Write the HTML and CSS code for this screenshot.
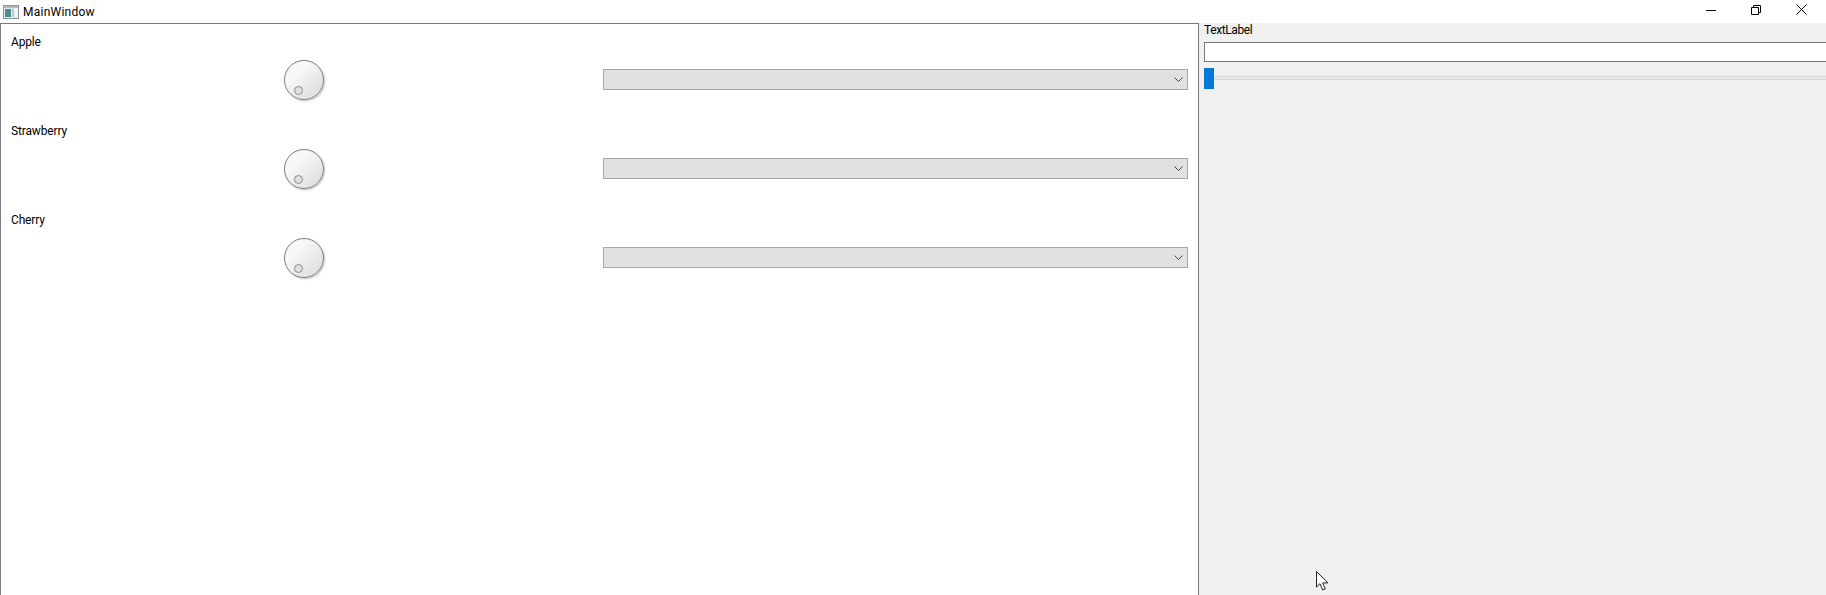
FILE: index.html
```html
<!DOCTYPE html>
<html lang="en">
<head>
    <meta charset="UTF-8">
    <title>MainWindow</title>
    <link rel="stylesheet" href="styles.css">
</head>
<body>
    <div class="titlebar">
        <svg class="app-icon" width="16" height="16" viewBox="0 0 16 16">
            <rect x="0.5" y="1.5" width="15" height="13" fill="#e8eef0" stroke="#8a949c"/>
            <rect x="1" y="2" width="14" height="2" fill="#aebcc6"/>
            <rect x="2" y="5" width="6" height="8" fill="#4f8f8a"/>
            <rect x="9" y="5" width="2" height="8" fill="#b5cbd0"/>
            <rect x="12" y="5" width="2" height="8" fill="#f5f8f8"/>
        </svg>
        <span class="title">MainWindow</span>
        <div class="win-buttons">
            <svg width="10" height="10" viewBox="0 0 10 10"><path d="M0 5.5H10" stroke="#000" fill="none"/></svg>
            <svg width="10" height="10" viewBox="0 0 10 10"><path d="M0.5 2.5H7.5V9.5H0.5ZM2.5 2.5V0.5H9.5V7.5H7.5" stroke="#000" fill="none"/></svg>
            <svg width="11" height="11" viewBox="0 0 11 11"><path d="M0.5 0.5L10.5 10.5M10.5 0.5L0.5 10.5" stroke="#000" fill="none"/></svg>
        </div>
    </div>

    <div class="main">
        <div class="left-panel">
            <div class="fruit">
                <div class="fruit-name">Apple</div>
                <div class="fruit-row">
                    <div class="dial"><span class="dial-notch"></span></div>
                    <div class="combo"><svg width="9" height="5" viewBox="0 0 9 5"><path d="M0.5 0.5L4.5 4.5L8.5 0.5" stroke="#444" fill="none"/></svg></div>
                </div>
            </div>
            <div class="fruit">
                <div class="fruit-name">Strawberry</div>
                <div class="fruit-row">
                    <div class="dial"><span class="dial-notch"></span></div>
                    <div class="combo"><svg width="9" height="5" viewBox="0 0 9 5"><path d="M0.5 0.5L4.5 4.5L8.5 0.5" stroke="#444" fill="none"/></svg></div>
                </div>
            </div>
            <div class="fruit">
                <div class="fruit-name">Cherry</div>
                <div class="fruit-row">
                    <div class="dial"><span class="dial-notch"></span></div>
                    <div class="combo"><svg width="9" height="5" viewBox="0 0 9 5"><path d="M0.5 0.5L4.5 4.5L8.5 0.5" stroke="#444" fill="none"/></svg></div>
                </div>
            </div>
        </div>

        <div class="right-panel">
            <div class="text-label">TextLabel</div>
            <div class="line-edit"></div>
            <div class="slider">
                <div class="slider-handle"></div>
                <div class="slider-groove"></div>
            </div>
        </div>
    </div>

    <svg class="cursor" width="13" height="20" viewBox="0 0 13 20">
        <path d="M0.5 0.5V16L4 12.7L6.7 19L9.3 17.9L6.7 11.9H12Z" fill="#fff" stroke="#222"/>
    </svg>
</body>
</html>
```

FILE: styles.css
```css
* {
    margin: 0;
    padding: 0;
    box-sizing: border-box;
}

html, body {
    height: 100%;
    overflow: hidden;
}

body {
    font-family: Roboto, sans-serif;
    font-size: 12px;
    color: #000;
    background-color: #f0f0f0;
    position: relative;
}

.titlebar {
    display: flex;
    align-items: center;
    height: 23px;
    padding-left: 3px;
    background-color: white;
}

.title {
    margin-left: 4px;
    letter-spacing: 0.25px;
}

.win-buttons {
    display: flex;
    align-items: center;
    gap: 35px;
    margin-left: auto;
    margin-right: 19px;
    margin-top: -4px;
}

.main {
    display: flex;
    height: 572px;
}

.left-panel {
    width: 1199px;
    height: 600px;
    padding: 0 10px 0 10px;
    background-color: white;
    border: 1px solid #7a7a85;
}

.fruit {
    height: 89px;
    padding-top: 9px;
}

.fruit-name {
    height: 18px;
    line-height: 18px;
    letter-spacing: -0.15px;
}

.fruit-row {
    display: grid;
    grid-template-columns: 1fr 1fr;
    column-gap: 6px;
    align-items: start;
    height: 40px;
    margin-top: 9px;
}

.dial {
    justify-self: center;
    position: relative;
    width: 40px;
    height: 40px;
    border: 1px solid #7d7d7d;
    border-radius: 50%;
    background: linear-gradient(135deg, #f8f8f8 30%, #e0e0e0 85%);
    box-shadow: 1px 1px 2px rgba(0, 0, 0, 0.25);
}

.dial-notch {
    position: absolute;
    left: 9px;
    bottom: 4px;
    width: 9px;
    height: 9px;
    border: 1px solid #8a8a8a;
    border-radius: 50%;
    background-color: #e0e0e0;
}

.combo {
    display: flex;
    align-items: center;
    justify-content: flex-end;
    height: 21px;
    margin-top: 9px;
    padding-right: 4px;
    background-color: #e1e1e1;
    border: 1px solid #a6a6a6;
}

.right-panel {
    flex: 1;
    min-width: 0;
    padding-left: 5px;
    overflow: hidden;
}

.text-label {
    height: 19px;
    line-height: 15px;
    letter-spacing: -0.4px;
}

.line-edit {
    width: calc(100% + 10px);
    height: 20px;
    background-color: white;
    border: 1px solid #7a7a7a;
}

.slider {
    position: relative;
    height: 21px;
    margin-top: 6px;
}

.slider-handle {
    position: relative;
    z-index: 1;
    width: 10px;
    height: 21px;
    background-color: #0078d7;
}

.slider-groove {
    position: absolute;
    left: 0;
    right: -10px;
    top: 8px;
    height: 4px;
    background-color: #e7eae7;
    border-top: 1px solid #d6d6d6;
    border-bottom: 1px solid #d6dcd6;
}

.cursor {
    position: absolute;
    left: 1316px;
    top: 571px;
}
```
